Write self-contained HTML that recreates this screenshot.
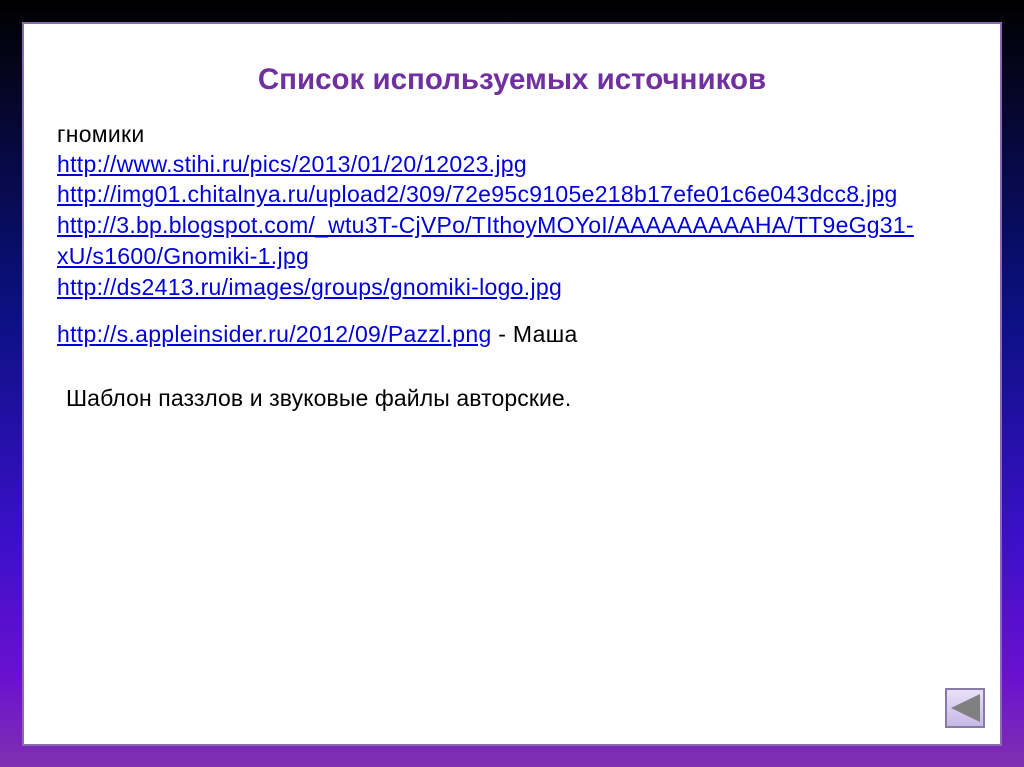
<!DOCTYPE html>
<html><head><meta charset="utf-8"><style>
html,body{margin:0;padding:0;}
body{width:1024px;height:767px;overflow:hidden;position:relative;
background:linear-gradient(180deg,#000 0%,#050520 10%,#0a1080 40%,#3a10c8 70%,#6a10d0 88%,#8030b0 100%);
font-family:"Liberation Sans","DejaVu Sans",sans-serif;}
.panel{position:absolute;left:22px;top:22px;width:976px;height:720px;background:#fff;border:2px solid #8a6ab0;}
.title{position:absolute;left:0;width:1024px;top:63px;text-align:center;color:#7030a0;font-weight:bold;font-size:29.5px;}
.l{position:absolute;left:57px;font-size:23px;letter-spacing:0.3px;color:#000;white-space:nowrap;}
a{color:#0000dd;text-decoration:underline;}
.btn{position:absolute;left:945px;top:688px;width:40px;height:40px;box-sizing:border-box;border:2px solid #8a7aa8;background:linear-gradient(#e8e0f8,#c8b8e8);}
</style></head><body>
<div class="panel"></div>
<div class="title">Список используемых источников</div>
<div class="l" style="top:121px">гномики</div>
<div class="l" style="top:151px"><a>http://www.stihi.ru/pics/2013/01/20/12023.jpg</a></div>
<div class="l" style="top:181px"><a>http://img01.chitalnya.ru/upload2/309/72e95c9105e218b17efe01c6e043dcc8.jpg</a></div>
<div class="l" style="top:212px;letter-spacing:0.25px"><a>http://3.bp.blogspot.com/_wtu3T-CjVPo/TIthoyMOYoI/AAAAAAAAAHA/TT9eGg31-</a></div>
<div class="l" style="top:243px"><a>xU/s1600/Gnomiki-1.jpg</a></div>
<div class="l" style="top:274px"><a>http://ds2413.ru/images/groups/gnomiki-logo.jpg</a></div>
<div class="l" style="top:321px"><a>http://s.appleinsider.ru/2012/09/Pazzl.png</a> - Маша</div>
<div class="l" style="top:385px;left:66px;letter-spacing:0.1px">Шаблон паззлов и звуковые файлы авторские.</div>
<div class="btn"><svg width="36" height="36" viewBox="0 0 36 36" style="position:absolute;left:0;top:0"><polygon points="4,18 33,4 33,32" fill="#808080"/></svg></div>
</body></html>
